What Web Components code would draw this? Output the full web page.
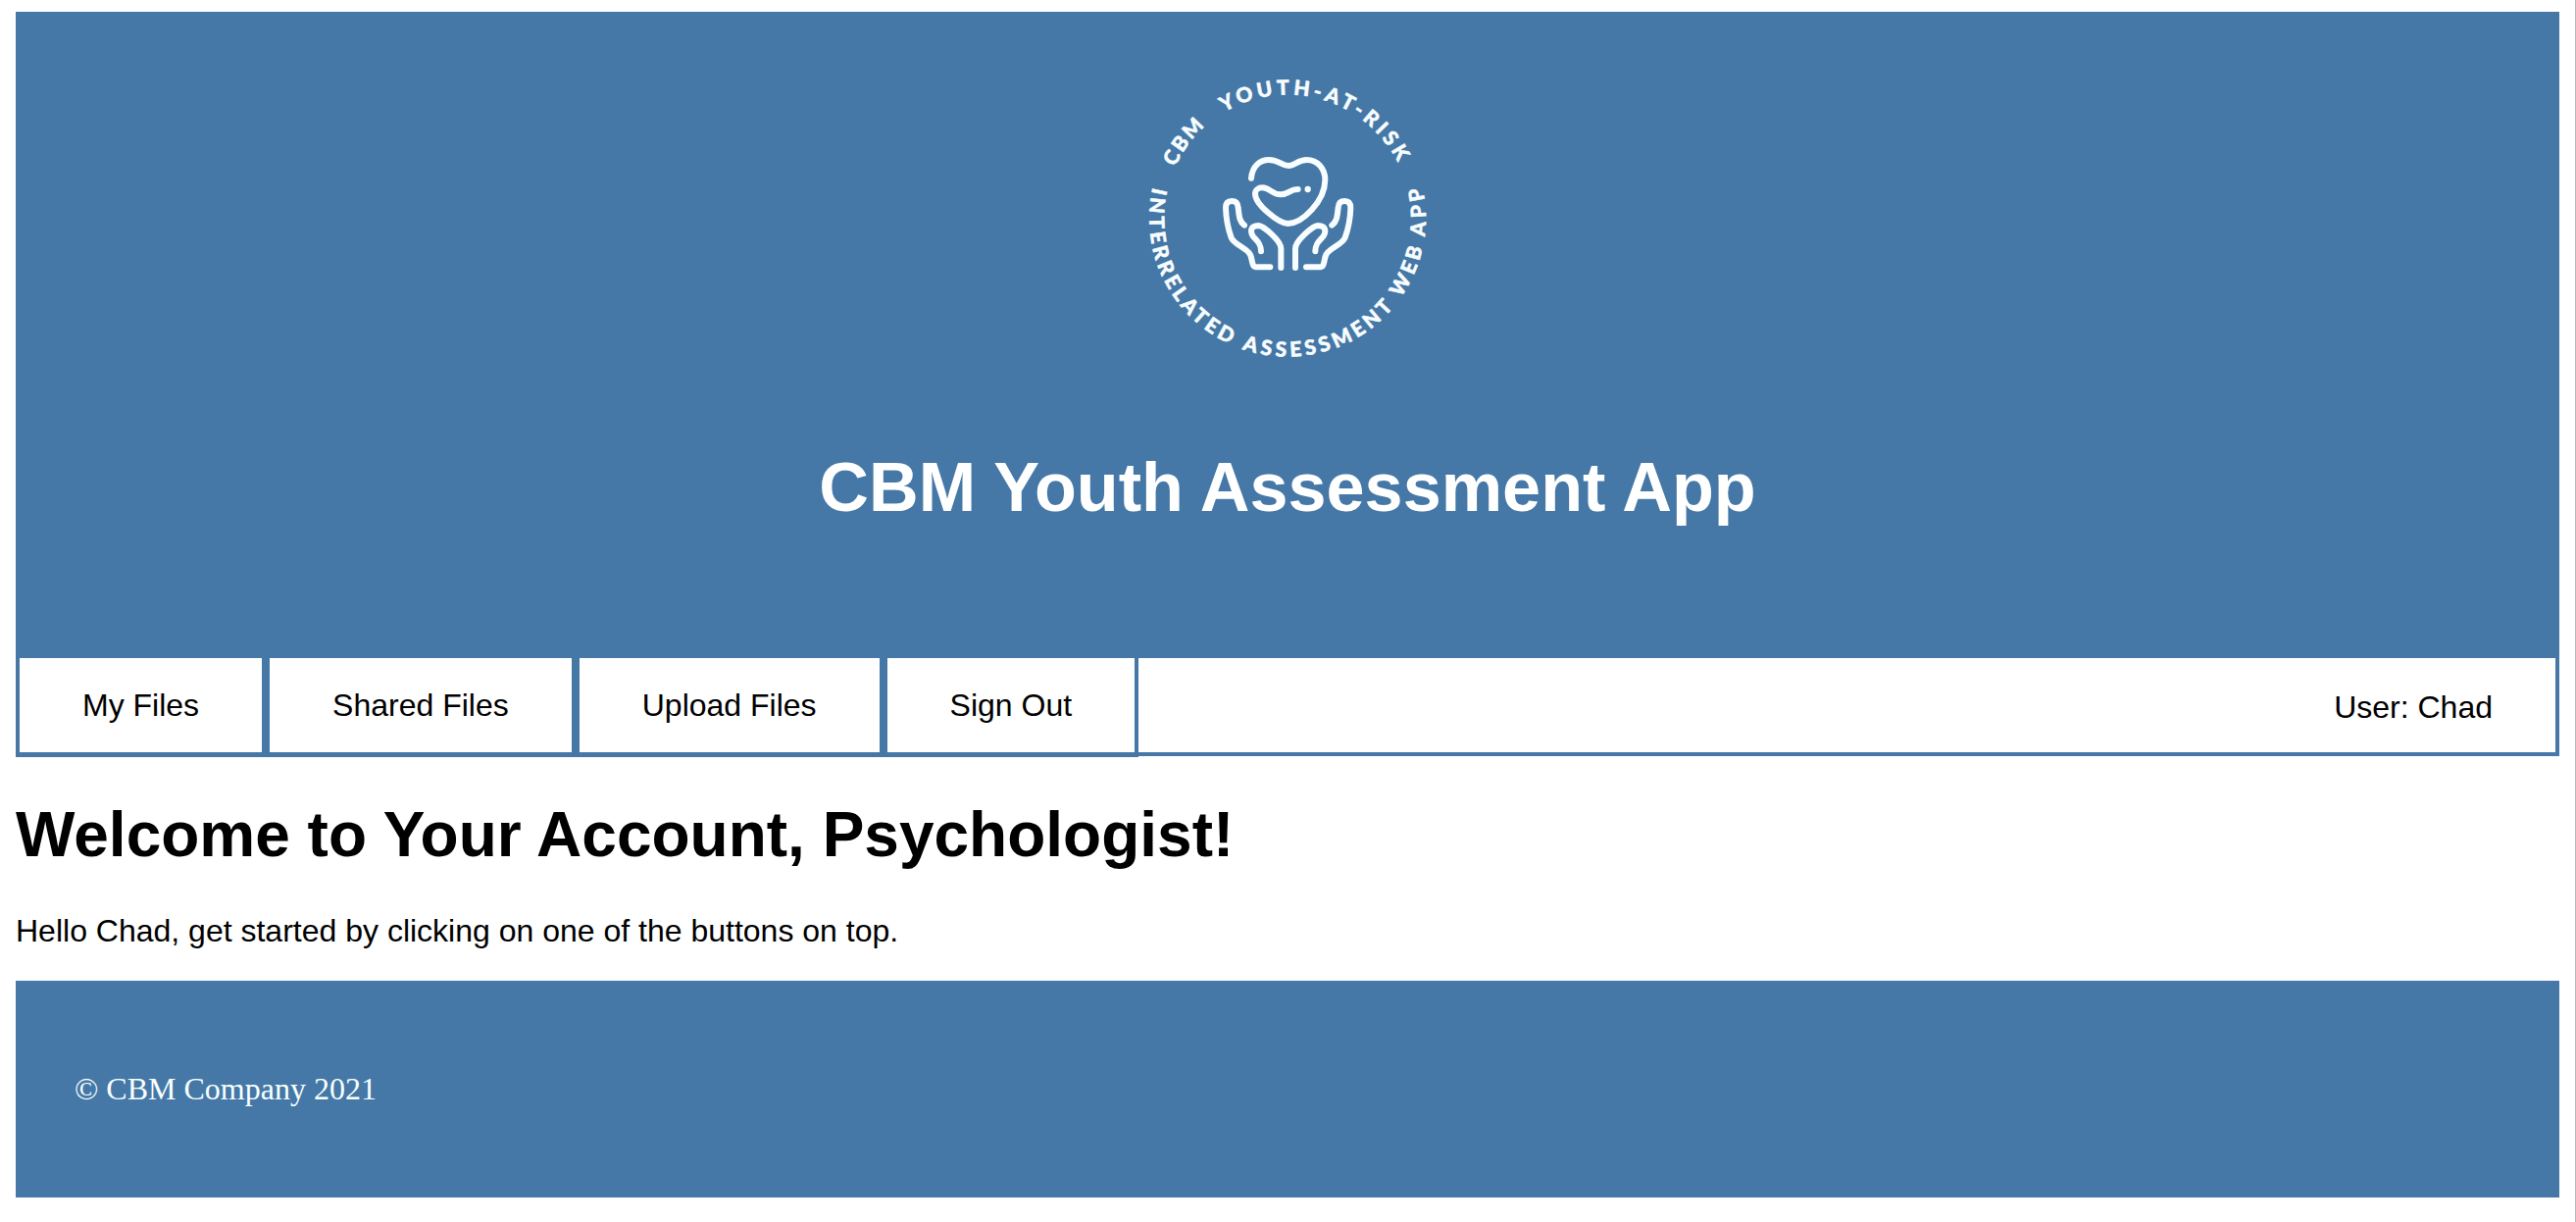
<!DOCTYPE html>
<html lang="en">
<head>
<meta charset="utf-8">
<title>CBM Youth Assessment App</title>
<style>
  html { box-sizing: border-box; min-height: 100vh; border-right: 1px solid #b9b9b9; background: #fff; }
  body { margin: 12px 16px 0; color: #000; font: 32px/37px "Liberation Sans", Arial, sans-serif; --brand: #4578a6; }
</style>
</head>
<body>
<app-header>CBM Youth Assessment App</app-header>
<nav-bar>
  <nav-tab>My Files</nav-tab>
  <nav-tab>Shared Files</nav-tab>
  <nav-tab>Upload Files</nav-tab>
  <nav-tab>Sign Out</nav-tab>
  <span slot="user">User: Chad</span>
</nav-bar>
<welcome-panel>
  <span slot="title">Welcome to Your Account, Psychologist!</span>
  Hello Chad, get started by clicking on one of the buttons on top.
</welcome-panel>
<app-footer>© CBM Company 2021</app-footer>

<script>
const define = (name, html) => customElements.define(name, class extends HTMLElement {
  constructor() {
    super();
    this.attachShadow({ mode: 'open' }).innerHTML = html;
  }
});

define('cbm-logo', `
<style>
  :host { display: block; width: 330px; height: 320px; }
  svg { display: block; width: 100%; height: 100%; }
  text { font: 900 63px Lato, sans-serif; fill: #f8fdff; stroke: #f8fdff; stroke-width: 1.6; stroke-linejoin: round; }
  .art { fill: none; stroke: #f8fdff; stroke-width: 18; stroke-linecap: round; stroke-linejoin: round; }
</style>
<svg viewBox="-5 0 990 960">
  <defs>
    <path id="over" d="M490 110A378 378 0 1 1 489.9 110"/>
    <path id="under" d="M490 65A423 423 0 1 0 490.1 65"/>
    <g id="hand">
      <path d="M117 254C101 242 101 225 98 200C97 186 91 180 78 180C65 180 60 188 60 201C61 235 67 265 77 292C86 314 126 324 135 344C142 358 139 382 153 382H196"/>
      <path d="M168 334C168 296 138 297 138 272C138 260 148 255 160 255C176 256 229 302 229 325V384"/>
    </g>
  </defs>
  <text transform="rotate(-65.5 490 488)" textLength="156"><textPath href="#over">CBM</textPath></text>
  <text transform="rotate(-30.8 490 488)" textLength="619"><textPath href="#over">YOUTH-AT-RISK</textPath></text>
  <text transform="rotate(-77 490 488)" textLength="578"><textPath href="#under">INTERRELATED</textPath></text>
  <text transform="rotate(-160.8 490 488)" textLength="511"><textPath href="#under">ASSESSMENT</textPath></text>
  <text transform="rotate(-235 490 488)" textLength="167"><textPath href="#under">WEB</textPath></text>
  <text transform="rotate(-262.4 490 488)" textLength="152"><textPath href="#under">APP</textPath></text>
  <g class="art" transform="translate(241 255)">
    <path d="M138 110C141 72 166 54 192 54C224 54 230 72 252 72C272 72 280 54 308 54C340 54 364 80 364 115C364 180 294 249 250 249C222 249 150 190 150 158C150 146 160 139 172 139C196 139 200 160 228 160C252 160 254 144 281 144"/>
    <use href="#hand"/>
    <use href="#hand" transform="translate(502 0) scale(-1 1)"/>
    <circle cx="311" cy="144" r="9.5" fill="#f8fdff" stroke="none"/>
  </g>
</svg>`);

define('app-header', `
<style>
  :host { display: flex; flex-direction: column; align-items: center; gap: 77px; box-sizing: border-box; height: 655px; padding-top: 48px; background: var(--brand); color: #fff; }
  h1 { margin: 0; font-size: 70.2px; line-height: 80px; }
</style>
<cbm-logo></cbm-logo>
<h1><slot></slot></h1>`);

define('nav-tab', `
<style>
  :host { display: block; border: 4px solid var(--brand); padding: 30px 64px; white-space: nowrap; }
</style>
<slot></slot>`);

define('nav-bar', `
<style>
  :host { display: flex; justify-content: space-between; align-items: flex-start; box-sizing: border-box; height: 104px; border: 4px solid var(--brand); }
  .tabs { display: flex; margin: -4px 0 -5px -4px; }
  .user { padding: 32px 64px 0 0; }
</style>
<div class="tabs"><slot></slot></div>
<div class="user"><slot name="user"></slot></div>`);

define('welcome-panel', `
<style>
  :host { display: flex; flex-direction: column; gap: 43px; padding: 43px 0 32px; }
  h1 { margin: 0; font-size: 64px; line-height: 74px; }
  p { margin: 0; }
</style>
<h1><slot name="title"></slot></h1>
<p><slot></slot></p>`);

define('app-footer', `
<style>
  :host { display: block; padding: 92px 60px; background: var(--brand); color: #f8ffff; font-family: "Liberation Serif", "Times New Roman", serif; }
</style>
<slot></slot>`);
</script>
</body>
</html>
